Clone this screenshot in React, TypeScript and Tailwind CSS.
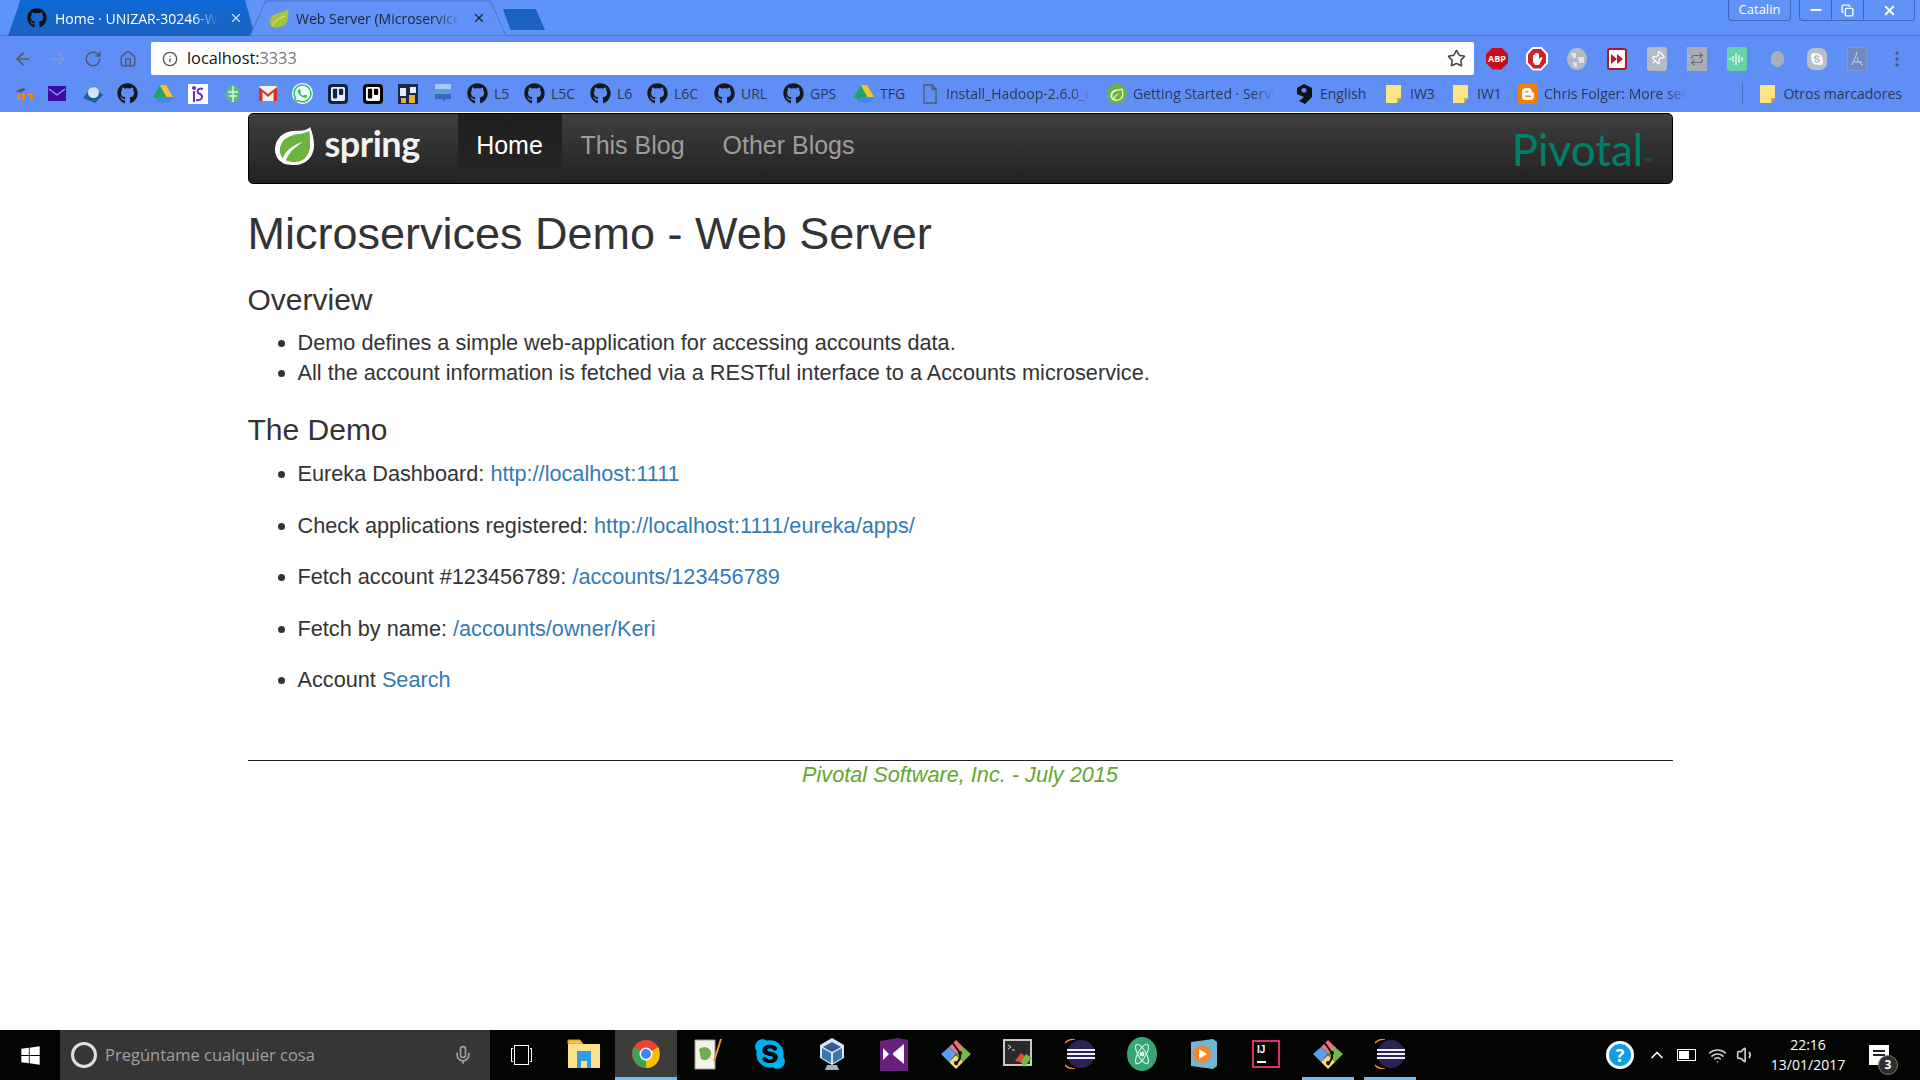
import { type ReactNode } from "react";
import { FaBloggerB, FaGithub, FaSkype, FaTrello, FaWhatsapp, FaWindows } from "react-icons/fa";
import {
    ArrowLeft,
    ArrowRight,
    ChevronUp,
    Copy,
    Home,
    Info,
    Mic,
    Minus,
    MoreVertical,
    Pin,
    Repeat,
    RotateCw,
    Star,
    Volume1,
    Wifi,
    X,
} from "lucide-react";

const uiFont = "font-['Open_Sans','Noto_Sans',sans-serif]";

function GitHubIcon({ className = "text-[#15171c]" }: { className?: string }) {
    return <FaGithub size={21} className={className} />;
}

function SpringLeaf({ size = 20 }: { size?: number }) {
    return (
        <svg width={size} height={size} viewBox="0 0 44 44">
            <path d="M38 4c-3 3-7 4-15 4C10 8 2 17 2 27c0 5 2 9 5 12l2 1c1 2 6 3 13 3 12 0 20-9 20-20 0-7-2-14-4-19z" fill="#fff" />
            <path d="M37 8C33 11 28 11 22 12 13 14 7 20 7 28c0 3 1 6 3 8 3-8 10-13 21-17-7 5-14 10-18 19 2 1 6 2 9 2 10 0 16-8 16-17 0-5 0-10-1-15z" fill="#6db33f" />
        </svg>
    );
}

function TabLeaf() {
    return (
        <svg width="20" height="20" viewBox="0 0 20 20" className="shrink-0">
            <path d="M19 1c-2 2-5 3-9 4C4 6 1 9 1 14c0 2 1 4 2 5 6 1 12 0 15-5 1-4 2-9 1-13z" fill="#a9c43a" />
            <path d="M3 17C7 12 11 10 16 8" stroke="#e4ec9a" strokeWidth="1" fill="none" />
        </svg>
    );
}

function DriveIcon() {
    return (
        <svg width="20" height="18" viewBox="0 0 24 21">
            <path d="M8 0h8l8 14h-8z" fill="#f7c22c" />
            <path d="M8 0l8 14-4 7L0 14z" fill="#1fa463" />
            <path d="M8 14h16l-4 7H4z" fill="#4687f4" />
        </svg>
    );
}

function FolderIcon() {
    return (
        <svg width="15" height="18" viewBox="0 0 15 18">
            <path d="M0 0h15v13l-4 5H0z" fill="#fde585" />
            <path d="M11 18v-5h4z" fill="#c9a93e" />
        </svg>
    );
}

function ChromeIcon() {
    return (
        <svg width="28" height="28" viewBox="0 0 28 28">
            <circle cx="14" cy="14" r="14" fill="#ea4335" />
            <path d="M14 14L1.9 7C0 10.500 0 17.500 3 21.500 5.500 25.500 9 27.500 14 28z" fill="#34a853" />
            <path d="M14 14l12.100-7C27.800 10 28.500 18 25.500 22 23 26 18.500 28 14 28z" fill="#fbbc05" />
            <circle cx="14" cy="14" r="6.500" fill="#fff" />
            <circle cx="14" cy="14" r="5" fill="#4285f4" />
        </svg>
    );
}

function GitGuiIcon() {
    return (
        <svg width="30" height="30" viewBox="0 0 30 30">
            <path d="M15 1l8 8-8 6-7-7z" fill="#f1747c" />
            <path d="M22 8l8 7-8 8-7-8z" fill="#71b84a" />
            <path d="M8 8l7 7-7 8-8-8z" fill="#5a9ef0" />
            <path d="M15 16l7 7-7 7-7-7z" fill="#f5dc72" />
            <path d="M11 3l8 11v5l-4 7" stroke="#111" strokeWidth="2" fill="none" />
            <circle cx="15" cy="24" r="2" fill="#111" />
            <circle cx="19" cy="14" r="2" fill="#111" />
        </svg>
    );
}

function EclipseIcon() {
    return (
        <svg width="30" height="30" viewBox="0 0 30 30">
            <path d="M10 0A15 15 0 0 0 10 30" fill="none" stroke="#f7941e" strokeWidth="1.500" />
            <circle cx="16" cy="15" r="14" fill="#2c2255" />
            <path d="M2 11h28M2 15h28M2 19h28" stroke="#f3f1f8" strokeWidth="2" />
        </svg>
    );
}

function Square({ className, children }: { className: string; children?: ReactNode }) {
    return <span className={`flex h-[20px] w-[20px] items-center justify-center ${className}`}>{children}</span>;
}

type Bookmark = { width: string; icon: ReactNode; label?: string; fade?: boolean };

const bookmarks: Bookmark[] = [
    {
        width: "w-[32px]",
        icon: (
            <svg width="18" height="16" viewBox="0 0 18 16">
                <path d="M1 14V7h3v7zM6 14V7h3v7zM11 14V7h3c3 0 3 2 3 3v4h-3v-4h-3z" fill="#f08020" />
                <path d="M0 5l7-3 3 1.500-6 3z" fill="#555" />
            </svg>
        ),
    },
    {
        width: "w-[36px]",
        icon: (
            <svg width="18" height="15" viewBox="0 0 18 15">
                <rect width="18" height="15" fill="#3b0ca3" />
                <path d="M1 3l8 6 8-6" stroke="#8fa8f5" strokeWidth="1.200" fill="none" />
            </svg>
        ),
    },
    {
        width: "w-[35px]",
        icon: (
            <svg width="20" height="20" viewBox="0 0 20 20">
                <path d="M10 2l10 9-8 8-12-5z" fill="#1a5fa8" />
                <circle cx="10.500" cy="8.500" r="5.500" fill="#d8e4ec" />
            </svg>
        ),
    },
    { width: "w-[35px]", icon: <GitHubIcon /> },
    { width: "w-[35px]", icon: <DriveIcon /> },
    {
        width: "w-[35px]",
        icon: (
            <span className="flex h-[20px] w-[20px] items-center justify-center bg-white">
                <svg width="14" height="18" viewBox="0 0 14 18">
                    <circle cx="3" cy="3" r="2" fill="#6a2bd9" />
                    <path d="M3 6v11M12 4C6 2 5 8 9 9c4 2 2 7-4 6" stroke="#6a2bd9" strokeWidth="2" fill="none" />
                </svg>
            </span>
        ),
    },
    {
        width: "w-[35px]",
        icon: (
            <svg width="16" height="18" viewBox="0 0 16 18">
                <ellipse cx="8" cy="9" rx="7.500" ry="8.500" fill="#58b888" />
                <path d="M3 7h10M4 11h8M8 1v16" stroke="#dff3e8" strokeWidth="1.500" />
            </svg>
        ),
    },
    {
        width: "w-[35px]",
        icon: (
            <svg width="18" height="15" viewBox="0 0 18 15">
                <rect width="18" height="15" rx="1" fill="#f2f2f2" />
                <path d="M0 15V1l9 7 9-7v14h-3.500V6L9 11 3.500 6v9z" fill="#d6342a" />
            </svg>
        ),
    },
    { width: "w-[35px]", icon: <FaWhatsapp size={21} className="rounded-full bg-white text-[#25c45a]" /> },
    {
        width: "w-[35px]",
        icon: (
            <Square className="rounded-sm bg-[#14243f]">
                <FaTrello size={16} className="text-[#e7eefb]" />
            </Square>
        ),
    },
    {
        width: "w-[35px]",
        icon: (
            <Square className="rounded-sm bg-black">
                <FaTrello size={16} className="text-white" />
            </Square>
        ),
    },
    {
        width: "w-[35px]",
        icon: (
            <svg width="20" height="20" viewBox="0 0 20 20">
                <rect width="20" height="20" fill="#1c2a44" />
                <path d="M2 4h6v8H2zM12 3h6v6h-6z" fill="#e6edf6" />
                <path d="M3 14h5v5H3zM11 11h6v8h-6z" fill="#e8b23f" />
            </svg>
        ),
    },
    {
        width: "w-[35px]",
        icon: (
            <svg width="18" height="20" viewBox="0 0 18 20">
                <path d="M1 0h16v5H1z" fill="#a9c9f2" />
                <path d="M1 5h16v5H1z" fill="#5e9bde" />
                <path d="M1 10h16v5h-5l-3 3v-3H1z" fill="#2f6eb6" />
            </svg>
        ),
    },
    { width: "w-[57px]", icon: <GitHubIcon />, label: "L5" },
    { width: "w-[66px]", icon: <GitHubIcon />, label: "L5C" },
    { width: "w-[57px]", icon: <GitHubIcon />, label: "L6" },
    { width: "w-[67px]", icon: <GitHubIcon />, label: "L6C" },
    { width: "w-[69px]", icon: <GitHubIcon />, label: "URL" },
    { width: "w-[70px]", icon: <GitHubIcon />, label: "GPS" },
    { width: "w-[66px]", icon: <DriveIcon />, label: "TFG" },
    {
        width: "w-[187px]",
        icon: (
            <svg width="14" height="20" viewBox="0 0 14 20">
                <path d="M1 1h8l4 4v14H1zM9 1v4h4" fill="none" stroke="#4f5a70" strokeWidth="1.300" />
            </svg>
        ),
        label: "Install_Hadoop-2.6.0_c",
        fade: true,
    },
    {
        width: "w-[187px]",
        icon: (
            <span className="flex h-[20px] w-[20px] items-center justify-center rounded-full bg-[#6db33f]">
                <SpringLeaf size={14} />
            </span>
        ),
        label: "Getting Started · Servi",
        fade: true,
    },
    {
        width: "w-[90px]",
        icon: (
            <svg width="18" height="22" viewBox="0 0 18 22">
                <path d="M9 1L17 5v9l-7 7-6-3 5-4-7-3V5zM6.500 6v2.500L9 10l2.500-1.500V6L9 5z" fill="#111" fillRule="evenodd" />
            </svg>
        ),
        label: "English",
    },
    { width: "w-[67px]", icon: <FolderIcon />, label: "IW3" },
    { width: "w-[67px]", icon: <FolderIcon />, label: "IW1" },
    {
        width: "w-[216px]",
        icon: (
            <Square className="rounded-[3px] bg-[#f57d00]">
                <FaBloggerB size={14} className="text-white" />
            </Square>
        ),
        label: "Chris Folger: More ser",
        fade: true,
    },
];

const octagon = "[clip-path:polygon(30%_0,70%_0,100%_30%,100%_70%,70%_100%,30%_100%,0_70%,0_30%)]";

const extensions: ReactNode[] = [
    <span key="abp" className={`flex h-[22px] w-[22px] items-center justify-center bg-[#c70d1c] text-[9px] font-bold text-white ${octagon}`}>
        ABP
    </span>,
    <span key="stop" className={`flex h-[24px] w-[22px] items-center justify-center bg-white ${octagon}`}>
        <span className={`flex h-[20px] w-[18px] items-center justify-center bg-[#d3202b] ${octagon}`}>
            <svg width="11" height="14" viewBox="0 0 11 14">
                <path d="M1 6V3h1.500v3-4.500H4V6V1h1.500v5-4.500H7V7l2-2 1.500 1L7 13H3L1 10z" fill="#fff" />
            </svg>
        </span>
    </span>,
    <svg key="wiki" width="20" height="22" viewBox="0 0 20 22">
        <ellipse cx="10" cy="11" rx="10" ry="11" fill="#b3b9c4" />
        <path d="M4 5h5v5H6zM11 9h6v6h-5zM6 14h4v5H7z" fill="#dfe2e8" />
    </svg>,
    <span key="ff" className="flex h-[22px] w-[20px] items-center justify-center rounded-[3px] border-2 border-[#a71d22] bg-white">
        <svg width="12" height="10" viewBox="0 0 12 10">
            <path d="M0 0l6 5-6 5zM6 0l6 5-6 5z" fill="#c4161c" />
        </svg>
    </span>,
    <span key="pin" className="flex h-[24px] w-[20px] items-center justify-center rounded-[3px] bg-[#b5bbc4]">
        <Pin size={15} className="rotate-45 text-white" />
    </span>,
    <span key="repeat" className="flex h-[24px] w-[20px] items-center justify-center bg-[#a8adb6]">
        <Repeat size={14} className="text-[#646a74]" />
    </span>,
    <span key="wave" className="flex h-[24px] w-[20px] items-center justify-center rounded-[3px] bg-[#68d3a6]">
        <svg width="16" height="14" viewBox="0 0 16 14">
            <path d="M1 6v2M4 4v6M7 1v12M10 3v8M13 5v4" stroke="#fff" strokeWidth="1.200" />
        </svg>
    </span>,
    <span key="bulb" className="h-[16px] w-[13px] rounded-full bg-[#a9afb9]" />,
    <span key="skype" className="flex h-[22px] w-[20px] items-center justify-center rounded-[7px] bg-[#b9bec7]">
        <FaSkype size={14} className="text-white" />
    </span>,
    <span key="pdf" className="flex h-[24px] w-[20px] items-center justify-center border border-[#8196cc] bg-[#7088c4]">
        <svg width="14" height="16" viewBox="0 0 14 16">
            <path d="M7 1c-1 4-3 10-6 13M7 6c1 4 3 7 6 8M3 11h9" stroke="#c9d3ec" strokeWidth="1" fill="none" />
        </svg>
    </span>,
];

function Tab({
    active,
    widthClass,
    icon,
    title,
}: {
    active: boolean;
    widthClass: string;
    icon: ReactNode;
    title: string;
}) {
    return (
        <div className={`relative flex h-[36px] items-center ${widthClass}`}>
            <svg className="absolute inset-0 h-full w-full" viewBox="0 0 100 36" preserveAspectRatio="none">
                <defs>
                    <linearGradient id="inactiveTab" x1="0" y1="0" x2="0" y2="1">
                        <stop offset="0" stopColor="#0d6ad8" />
                        <stop offset="1" stopColor="#1b62bf" />
                    </linearGradient>
                </defs>
                <path
                    d={active ? "M0 36L6 1H94L100 36Z" : "M0 36L5 0H96L100 36Z"}
                    fill={active ? "#6192f7" : "url(#inactiveTab)"}
                    stroke={active ? "#4a73c4" : "none"}
                    vectorEffect="non-scaling-stroke"
                />
            </svg>
            <div className="relative flex w-full items-center pl-[19px]">
                {icon}
                <span
                    className={`w-[163px] shrink-0 text-[14px] whitespace-nowrap [mask-image:linear-gradient(to_right,black_85%,transparent)] ${
                        active ? "ml-[7px] text-[#1b2433]" : "ml-[8px] text-white"
                    }`}
                >
                    {title}
                </span>
                <X size={14} className={`shrink-0 ${active ? "ml-[13px] text-[#1b2433]" : "ml-[11px] text-[#cfe0f7]"}`} />
            </div>
        </div>
    );
}

function BrowserChrome() {
    return (
        <header className={`bg-[#5f8ef5] ${uiFont}`}>
            <div className="flex h-[36px] justify-between border-b border-[#4a73c4] bg-[#6093f7]">
                <div className="flex pl-[8px]">
                    <Tab active={false} widthClass="w-[247px]" icon={<FaGithub size={20} className="shrink-0 text-[#111]" />} title="Home · UNIZAR-30246-W" />
                    <div className="-ml-[5px]">
                        <Tab active widthClass="w-[256px]" icon={<TabLeaf />} title="Web Server (Microservice" />
                    </div>
                    <div className="mt-[9px] -ml-[3px] h-[21px] w-[42px] bg-[#1b62bf] [clip-path:polygon(0_0,78%_0,100%_100%,18%_100%)]" />
                </div>
                <div className="flex items-start pr-[5px]">
                    <div className="flex h-[21px] w-[63px] items-center justify-center rounded-b-[4px] border border-t-0 border-[#3e67b8] text-[13px] text-white">
                        Catalin
                    </div>
                    <div className="ml-[8px] flex h-[21px] w-[116px] rounded-b-[4px] border border-t-0 border-[#3e67b8] text-white">
                        <span className="flex w-[32px] items-center justify-center border-r border-[#3e67b8]">
                            <Minus size={16} strokeWidth={3} />
                        </span>
                        <span className="flex w-[32px] items-center justify-center border-r border-[#3e67b8]">
                            <Copy size={13} strokeWidth={2.5} />
                        </span>
                        <span className="flex flex-1 items-center justify-center">
                            <X size={15} strokeWidth={3} />
                        </span>
                    </div>
                </div>
            </div>
            <div className="flex h-[39px] items-stretch pt-[6px]">
                <div className="flex w-[151px] items-center pl-[5px]">
                    <span className="flex w-[35px] justify-center"><ArrowLeft size={20} className="text-[#50586a]" /></span>
                    <span className="flex w-[35px] justify-center"><ArrowRight size={20} className="text-[#7f9bd8]" /></span>
                    <span className="flex w-[35px] justify-center"><RotateCw size={18} className="text-[#50586a]" /></span>
                    <span className="flex w-[35px] justify-center"><Home size={18} className="text-[#50586a]" /></span>
                </div>
                <div className="flex w-[1323px] items-center rounded-[2px] bg-white pr-[8px] pl-[11px] text-[16.300px]">
                    <Info size={16} className="text-[#555]" />
                    <span className="ml-[9px] text-[#111]">localhost:</span>
                    <span className="text-[#767676]">3333</span>
                    <Star size={19} className="ml-auto text-[#444]" />
                </div>
                <div className="flex flex-1 items-center pl-[3px]">
                    {extensions.map((item, i) => (
                        <span key={i} className="flex w-[40px] justify-center">
                            {item}
                        </span>
                    ))}
                    <MoreVertical size={20} className="ml-[10px] text-[#50586a]" />
                </div>
            </div>
            <div className="flex h-[37px] items-center pl-[7px] text-[14px] text-[#2a3852]">
                {bookmarks.map((b, i) => (
                    <div key={i} className={`flex items-center gap-[6px] pl-[7px] ${b.width}`}>
                        <span className="flex w-[21px] shrink-0 justify-center">{b.icon}</span>
                        {b.label && (
                            <span className={`whitespace-nowrap ${b.fade ? "[mask-image:linear-gradient(to_right,black_85%,transparent)]" : ""}`}>
                                {b.label}
                            </span>
                        )}
                    </div>
                ))}
                <div className="ml-auto flex h-[22px] items-center gap-[8px] border-l border-[#4a73c4] pr-[18px] pl-[17px]">
                    <FolderIcon />
                    <span>Otros marcadores</span>
                </div>
            </div>
        </header>
    );
}

function NavBar() {
    return (
        <nav className="flex h-[71px] items-stretch rounded-[5px] border border-black bg-gradient-to-b from-[#3f3f3f] to-[#222222]">
            <div className="flex w-[209px] items-center pb-[8px] pl-[24px]">
                <SpringLeaf size={43} />
                <span className="ml-[9px] pb-[3px] font-['Lato',sans-serif] text-[36px] leading-none font-bold tracking-[-0.5px] text-[#f2f2f2]">
                    spring
                </span>
            </div>
            <a className="flex w-[104px] items-center justify-center bg-gradient-to-b from-[#1f1f1f] to-[#262626] pb-[6px] text-[25px] text-white">
                Home
            </a>
            <a className="flex w-[142px] items-center justify-center pb-[6px] text-[25px] text-[#9d9d9d]">This Blog</a>
            <a className="flex w-[170px] items-center justify-center pb-[6px] text-[25px] text-[#9d9d9d]">Other Blogs</a>
            <div className="ml-auto flex items-center pr-[20px]">
                <span className="font-['Lato',sans-serif] text-[44px] leading-none font-normal text-[#00806a]">Pivotal</span>
                <span className="mt-[24px] ml-[1px] text-[5px] text-[#00806a]">TM</span>
            </div>
        </nav>
    );
}

function DemoLink({ children }: { children: ReactNode }) {
    return <a className="text-[#337ab7]">{children}</a>;
}

function Page() {
    return (
        <main className="mx-auto flex w-[1425px] flex-1 flex-col pt-[1px] font-['Liberation_Sans',Arial,sans-serif] text-[#333333]">
            <NavBar />
            <h1 className="mt-[22px] text-[45px] leading-[56px]">Microservices Demo - Web Server</h1>
            <h2 className="mt-[21px] text-[30px] leading-[34px]">Overview</h2>
            <ul className="mt-[11px] list-disc pl-[50px] text-[21.700px] leading-[30px]">
                <li>Demo defines a simple web-application for accessing accounts data.</li>
                <li>All the account information is fetched via a RESTful interface to a Accounts microservice.</li>
            </ul>
            <h2 className="mt-[25px] text-[30px] leading-[34px]">The Demo</h2>
            <ul className="mt-[12px] flex list-disc flex-col gap-[21.500px] pl-[50px] text-[21.700px] leading-[30px]">
                <li>
                    Eureka Dashboard: <DemoLink>http://localhost:1111</DemoLink>
                </li>
                <li>
                    Check applications registered: <DemoLink>http://localhost:1111/eureka/apps/</DemoLink>
                </li>
                <li>
                    Fetch account #123456789: <DemoLink>/accounts/123456789</DemoLink>
                </li>
                <li>
                    Fetch by name: <DemoLink>/accounts/owner/Keri</DemoLink>
                </li>
                <li>
                    Account <DemoLink>Search</DemoLink>
                </li>
            </ul>
            <footer className="mt-[65px] border-t border-[#222] text-center text-[21.700px] leading-[28px] text-[#5fa82c] italic">
                Pivotal Software, Inc. - July 2015
            </footer>
        </main>
    );
}

const taskIcons: { icon: ReactNode; active?: boolean; running?: boolean }[] = [
    {
        icon: (
            <svg width="34" height="30" viewBox="0 0 34 30">
                <path d="M1 5V1h12l3 4z" fill="#f4c84a" stroke="#c49a22" />
                <rect x="1" y="5" width="32" height="24" fill="#fde28a" />
                <path d="M10 29V17h14v12h-4v-7h-6v7z" fill="#2f9be4" />
                <path d="M10 12h14v5H10z" fill="#2f9be4" />
            </svg>
        ),
    },
    { icon: <ChromeIcon />, active: true, running: true },
    {
        icon: (
            <svg width="28" height="34" viewBox="0 0 28 34">
                <path d="M1 3h20v29H1z" fill="#f1f2e4" stroke="#999" />
                <path d="M5 12c6-4 12-1 12 4s-5 9-10 6z" fill="#6ab04c" />
                <path d="M20 24L27 2" stroke="#e59a2d" strokeWidth="2" />
            </svg>
        ),
    },
    { icon: <FaSkype size={34} className="text-[#00aff0]" /> },
    {
        icon: (
            <svg width="26" height="34" viewBox="0 0 26 34">
                <path d="M13 1l12 7v13l-12 7L1 21V8z" fill="#dbe7f3" />
                <path d="M13 5l9 5-9 5-9-5z" fill="#2f5f8a" />
                <path d="M3 11l9 5v10l-9-5zM23 11l-9 5v10l9-5z" fill="#3a78b0" />
                <path d="M8 28h10l2 5H6z" fill="#9fb4c8" />
            </svg>
        ),
    },
    {
        icon: (
            <svg width="28" height="34" viewBox="0 0 28 34">
                <path d="M0 4l18-3 10 2v31H0z" fill="#68217a" />
                <path d="M3 11l6 6-6 6zM24 7v20l-12-10z" fill="#fff" />
                <path d="M9 17l4-3v6z" fill="#68217a" />
            </svg>
        ),
    },
    { icon: <GitGuiIcon /> },
    {
        icon: (
            <svg width="30" height="30" viewBox="0 0 30 30">
                <rect x="1" y="1" width="27" height="25" fill="#2a2a2a" stroke="#c9c9c9" strokeWidth="2" />
                <path d="M5 6l3 2-3 2M9 11h3" stroke="#ddd" fill="none" />
                <path d="M12 22l6-8 5 4-3 6z" fill="#e04f3c" />
                <path d="M18 23l5-8 6 4-8 9z" fill="#6fbf3a" />
            </svg>
        ),
    },
    { icon: <EclipseIcon /> },
    {
        icon: (
            <svg width="30" height="34" viewBox="0 0 30 34">
                <ellipse cx="15" cy="17" rx="15" ry="17" fill="#37a573" />
                <circle cx="15" cy="17" r="2.500" fill="#d7f2e3" />
                <g fill="none" stroke="#d7f2e3" strokeWidth="1.200">
                    <ellipse cx="15" cy="17" rx="4" ry="11" transform="rotate(30 15 17)" />
                    <ellipse cx="15" cy="17" rx="4" ry="11" transform="rotate(-30 15 17)" />
                </g>
            </svg>
        ),
    },
    {
        icon: (
            <svg width="26" height="30" viewBox="0 0 26 30">
                <path d="M0 3l22-3 4 3v24l-4 3-22-3z" fill="#6fb7d9" />
                <circle cx="11" cy="15" r="9" fill="#f5842b" />
                <path d="M8 10l8 5-8 5z" fill="#fff" />
            </svg>
        ),
    },
    {
        icon: (
            <span className="flex h-[24px] w-[24px] flex-col justify-between bg-black p-[3px] font-['Liberation_Sans',sans-serif] text-[10px] leading-none font-bold text-white outline-2 outline-offset-0 outline-[#d6336c]">
                <span>IJ</span>
                <span className="h-[2px] w-[9px] bg-white" />
            </span>
        ),
    },
    { icon: <GitGuiIcon />, running: true },
    { icon: <EclipseIcon />, running: true },
];

function Taskbar() {
    return (
        <footer className={`flex h-[50px] items-stretch bg-[#030503] text-white ${uiFont}`}>
            <div className="flex w-[60px] items-center justify-center">
                <FaWindows size={21} />
            </div>
            <div className="flex w-[430px] items-center bg-[#363636] pr-[17px] pl-[11px] text-[16.500px] text-[#a0a0a0]">
                <span className="h-[26px] w-[26px] rounded-full border-[3px] border-[#e0e0e0]" />
                <span className="ml-[8px]">Pregúntame cualquier cosa</span>
                <Mic size={20} className="ml-auto" />
            </div>
            <div className="flex w-[63px] items-center justify-center">
                <span className="h-[14px] w-[2px] border-y border-l border-white" />
                <span className="mx-[1px] h-[20px] w-[15px] border border-white" />
                <span className="h-[14px] w-[2px] border-y border-r border-white" />
            </div>
            {taskIcons.map((t, i) => (
                <div
                    key={i}
                    className={`relative flex w-[62px] items-center justify-center pb-[2px] ${t.active ? "bg-[#3a3d3a]" : ""}`}
                >
                    {t.icon}
                    {t.running && (
                        <span className={`absolute bottom-0 h-[3px] bg-[#76b9ed] ${t.active ? "inset-x-0" : "inset-x-[5px]"}`} />
                    )}
                </div>
            ))}
            <div className="ml-auto flex items-center">
                <span className="flex h-[28px] w-[28px] items-center justify-center rounded-full border-[3px] border-white bg-[#0f9fe0] text-[18px] leading-none font-bold text-white">
                    ?
                </span>
                <ChevronUp size={20} className="ml-[13px]" />
                <span className="ml-[10px] flex h-[12px] w-[19px] items-center border border-white pl-[1px]">
                    <span className="h-[8px] w-[10px] bg-white" />
                </span>
                <Wifi size={19} className="ml-[12px] text-[#cfcfcf]" />
                <Volume1 size={20} className="ml-[9px] text-[#cfcfcf]" />
                <div className="ml-[13px] flex w-[78px] flex-col items-center text-[14px] leading-[20px]">
                    <span>22:16</span>
                    <span>13/01/2017</span>
                </div>
                <div className="relative mr-[31px] ml-[22px] h-[20px] w-[20px] bg-white">
                    <span className="absolute top-[5px] left-[4px] h-[2px] w-[12px] bg-[#222]" />
                    <span className="absolute top-[9px] left-[4px] h-[2px] w-[12px] bg-[#222]" />
                    <span className="absolute top-[10px] left-[9px] flex h-[20px] w-[20px] items-center justify-center rounded-full border border-[#777] bg-[#2e2e2e] text-[12px] font-bold text-white">
                        3
                    </span>
                </div>
            </div>
        </footer>
    );
}

export default function App() {
    return (
        <div className="flex h-[1080px] w-[1920px] flex-col overflow-hidden bg-white">
            <BrowserChrome />
            <Page />
            <Taskbar />
        </div>
    );
}
